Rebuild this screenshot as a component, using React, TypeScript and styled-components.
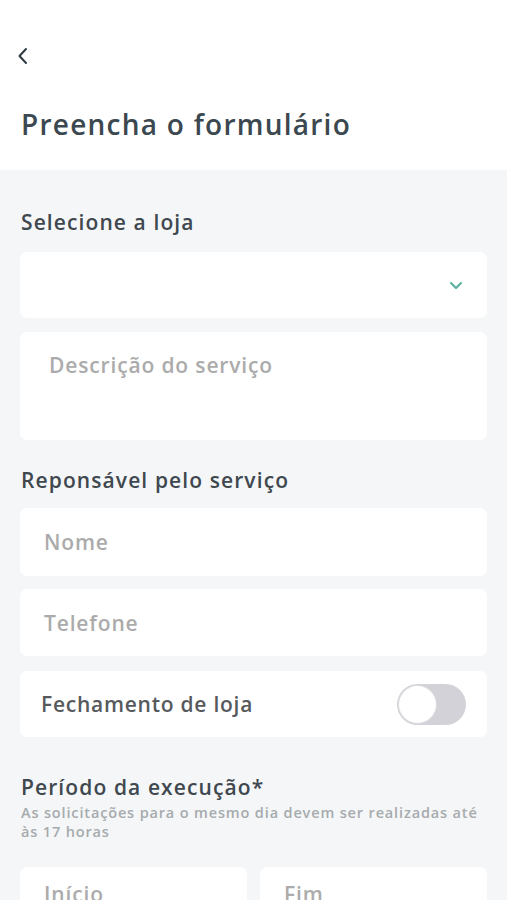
import React from "react";
import styled, { createGlobalStyle } from "styled-components";

const Global = createGlobalStyle`
  html, body { margin: 0; padding: 0; background: #f5f6f7; }
  body { font-family: "Open Sans", "DejaVu Sans", sans-serif; -webkit-font-smoothing: antialiased; }
  * { box-sizing: border-box; }
`;

const Page = styled.div`
  width: 507px;
  height: 900px;
  overflow: hidden;
  background: #f5f6f7;
  display: flex;
  flex-direction: column;
`;

const Header = styled.header`
  background: #ffffff;
  height: 170px;
  flex-shrink: 0;
  display: flex;
  flex-direction: column;
  padding: 44px 20px 0 17px;
`;

const BackButton = styled.button`
  width: 24px;
  height: 24px;
  padding: 0;
  border: 0;
  background: transparent;
  display: flex;
  align-items: center;
  justify-content: flex-start;
  cursor: pointer;
`;

const Title = styled.h1`
  margin: 38px 0 0 4px;
  font-size: 28px;
  font-weight: 600;
  color: #3c4850;
  letter-spacing: 1.25px;
  line-height: 36px;
`;

const Content = styled.main`
  display: flex;
  flex-direction: column;
  padding: 0 20px;
`;

const SectionLabel = styled.h2<{ $top: number }>`
  margin: ${(p) => p.$top}px 0 0 1px;
  font-size: 21px;
  font-weight: 600;
  color: #3f484f;
  line-height: 26px;
  letter-spacing: 1.1px;
`;

const Hint = styled.p`
  margin: 3px 0 0 1px;
  font-size: 14.5px;
  font-weight: 600;
  line-height: 19px;
  color: #a6abae;
  letter-spacing: 0.85px;
`;

const Field = styled.div<{ $h: number; $top: number; $pl?: number; $align?: string }>`
  background: #ffffff;
  border-radius: 7px;
  height: ${(p) => p.$h}px;
  margin-top: ${(p) => p.$top}px;
  display: flex;
  align-items: ${(p) => p.$align ?? "center"};
  justify-content: space-between;
  padding: 0 21px 0 ${(p) => p.$pl ?? 24}px;
`;

const Chevron = styled.svg`
  margin-right: 3px;
`;

const Placeholder = styled.span<{ $pt?: number }>`
  font-size: 21px;
  font-weight: 600;
  color: #ababab;
  letter-spacing: 0.85px;
  padding-top: ${(p) => p.$pt ?? 0}px;
`;

const ToggleLabel = styled.span`
  font-size: 21px;
  font-weight: 600;
  color: #575a5d;
  letter-spacing: 0.75px;
`;

const Switch = styled.div`
  width: 69px;
  height: 41px;
  border-radius: 21px;
  background: #d2d2d8;
  padding: 2px;
  display: flex;
  align-items: center;
`;

const Knob = styled.div`
  width: 37px;
  height: 37px;
  border-radius: 50%;
  background: #ffffff;
  box-shadow: 0 0 0 1px #dcdcdf;
`;

const Row = styled.div`
  display: grid;
  grid-template-columns: 1fr 1fr;
  gap: 13px;
  margin-top: 26px;
`;

const DateField = styled.div`
  background: #ffffff;
  border-radius: 7px;
  height: 66px;
  padding: 13px 0 0 24px;
`;

export default function App() {
  return (
    <Page>
      <Global />
      <Header>
        <BackButton aria-label="Voltar">
          <svg width="12" height="18" viewBox="0 0 12 18" fill="none">
            <path d="M9 2 L2.5 9 L9 16" stroke="#2f3a40" strokeWidth="2" strokeLinecap="round" strokeLinejoin="round" />
          </svg>
        </BackButton>
        <Title>Preencha o formulário</Title>
      </Header>
      <Content>
        <SectionLabel $top={39}>Selecione a loja</SectionLabel>
        <Field $h={66} $top={17}>
          <span />
          <Chevron width="14" height="9" viewBox="0 0 14 9" fill="none">
            <path d="M2 2 L7 7 L12 2" stroke="#5aae9c" strokeWidth="2" strokeLinecap="round" strokeLinejoin="round" />
          </Chevron>
        </Field>
        <Field $h={108} $top={14} $pl={29} $align="flex-start">
          <Placeholder $pt={19}>Descrição do serviço</Placeholder>
        </Field>
        <SectionLabel $top={27}>Reponsável pelo serviço</SectionLabel>
        <Field $h={68} $top={15}>
          <Placeholder>Nome</Placeholder>
        </Field>
        <Field $h={67} $top={13}>
          <Placeholder>Telefone</Placeholder>
        </Field>
        <Field $h={66} $top={15} $pl={21}>
          <ToggleLabel>Fechamento de loja</ToggleLabel>
          <Switch>
            <Knob />
          </Switch>
        </Field>
        <SectionLabel $top={37}>Período da execução*</SectionLabel>
        <Hint>
          As solicitações para o mesmo dia devem ser realizadas até
          <br />
          às 17 horas
        </Hint>
        <Row>
          <DateField>
            <Placeholder>Início</Placeholder>
          </DateField>
          <DateField>
            <Placeholder>Fim</Placeholder>
          </DateField>
        </Row>
      </Content>
    </Page>
  );
}
